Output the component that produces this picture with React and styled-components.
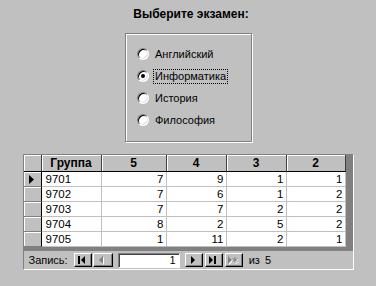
import { Fragment } from "react";
import styled, { createGlobalStyle } from "styled-components";

const GlobalStyle = createGlobalStyle`
  html, body {
    margin: 0;
    padding: 0;
    background: #c0c0c0;
  }
  body {
    font-family: "Liberation Sans", Arial, sans-serif;
    font-size: 11px;
    color: #000;
  }
`;

const Page = styled.div`
  width: 376px;
  height: 286px;
  display: flex;
  flex-direction: column;
  align-items: center;
  box-sizing: border-box;
  padding-top: 7px;
  background: #c0c0c0;
`;

const Title = styled.div`
  font-size: 12px;
  font-weight: 700;
  line-height: 14px;
  margin-left: 6px;
`;

const GroupBox = styled.div`
  box-sizing: border-box;
  width: 127px;
  height: 109px;
  margin-top: 12px;
  margin-left: 1px;
  border: 1px solid #808080;
  box-shadow: inset 1px 1px #ffffff, 1px 1px #ffffff;
  display: flex;
  flex-direction: column;
  padding: 9px 0 0 11px;
`;

const RadioRow = styled.label`
  display: flex;
  align-items: center;
  height: 22px;
  gap: 4px;
`;

const RadioCircle = styled.span`
  box-sizing: border-box;
  width: 12px;
  height: 12px;
  border-radius: 50%;
  border: 1px solid;
  border-color: #808080 #ffffff #ffffff #808080;
  background: #ffffff;
  box-shadow: inset 1px 1px #000000, inset -1px -1px #dfdfdf;
  display: flex;
  align-items: center;
  justify-content: center;

  &::after {
    content: "";
    width: 4px;
    height: 4px;
    border-radius: 50%;
    background: ${(p) => (p.$checked ? "#000" : "transparent")};
  }
`;

const RadioLabel = styled.span`
  font-size: 11px;
  line-height: 13px;
  padding: 0 1px;
  border: 1px dotted ${(p) => (p.$focused ? "#000" : "transparent")};
`;

const Frame = styled.div`
  box-sizing: border-box;
  width: 331px;
  margin-top: 12px;
  border: 1px solid;
  border-color: #808080 #ffffff #ffffff #808080;
  display: flex;
  flex-direction: column;
`;

const DataArea = styled.div`
  background: #808080;
  padding: 0 7px 4px 0;
`;

const Grid = styled.div`
  display: grid;
  grid-template-columns: 18px 60px 65px 60px 60px 59px;
  grid-auto-rows: 15px;
  grid-template-rows: 17px;
`;

const HeadCell = styled.div`
  box-sizing: border-box;
  background: #c0c0c0;
  border-right: 1px solid #404040;
  border-bottom: 1px solid #000;
  box-shadow: inset 1px 1px #ffffff;
  font-size: 12px;
  font-weight: 700;
  line-height: 16px;
  text-align: center;
`;

const Selector = styled.div`
  box-sizing: border-box;
  background: #c0c0c0;
  border-right: 1px solid #000;
  border-bottom: 1px solid #808080;
  box-shadow: inset 1px 1px #ffffff;
  display: flex;
  align-items: center;
  justify-content: center;
`;

const Cell = styled.div`
  box-sizing: border-box;
  background: #ffffff;
  border-right: 1px solid #c0c0c0;
  border-bottom: 1px solid #c0c0c0;
  font-size: 11.5px;
  line-height: 14px;
  padding: 0 2px 0 4px;
  text-align: ${(p) => (p.$num ? "right" : "left")};
`;

const NavBar = styled.div`
  height: 18px;
  display: flex;
  align-items: center;
  padding-left: 5px;
  background: #c0c0c0;
`;

const NavLabel = styled.span`
  font-size: 11px;
  margin-right: 6px;
`;

const NavButton = styled.span`
  box-sizing: border-box;
  width: ${(p) => p.$w || 18}px;
  height: 14px;
  margin-right: ${(p) => p.$mr ?? 2}px;
  background: #c0c0c0;
  border: 1px solid;
  border-color: #ffffff #000000 #000000 #ffffff;
  box-shadow: inset -1px -1px #808080;
  display: flex;
  align-items: center;
  justify-content: center;
`;

const RecordInput = styled.span`
  box-sizing: border-box;
  width: 62px;
  height: 15px;
  margin-right: 5px;
  background: #ffffff;
  border: 1px solid;
  border-color: #808080 #ffffff #ffffff #808080;
  box-shadow: inset 1px 1px #404040;
  font-size: 11px;
  line-height: 13px;
  text-align: right;
  padding-right: 3px;
`;

const NavCount = styled.span`
  font-size: 11px;
  margin-left: 6px;
  word-spacing: 2px;
`;

const rows = [
  ["9701", 7, 9, 1, 1],
  ["9702", 7, 6, 1, 2],
  ["9703", 7, 7, 2, 2],
  ["9704", 8, 2, 5, 2],
  ["9705", 1, 11, 2, 1],
];

const exams = ["Английский", "Информатика", "История", "Философия"];

function Icon({ kind, disabled }) {
  const c = disabled ? "#808080" : "#000";
  const shadow = disabled ? "#ffffff" : "none";
  const shapes = {
    first: (f) => (
      <>
        <rect x="1" y="0" width="2" height="8" fill={f} />
        <polygon points="8,0 4,4 8,8" fill={f} />
      </>
    ),
    prev: (f) => <polygon points="6,0 2,4 6,8" fill={f} />,
    next: (f) => <polygon points="3,0 7,4 3,8" fill={f} />,
    last: (f) => (
      <>
        <polygon points="1,0 5,4 1,8" fill={f} />
        <rect x="6" y="0" width="2" height="8" fill={f} />
      </>
    ),
    add: (f) => (
      <>
        <polygon points="0,0 4,4 0,8" fill={f} />
        <path d="M7 1v6M4.5 2.5l5 3M9.5 2.5l-5 3" stroke={f} strokeWidth="1" />
      </>
    ),
  };
  return (
    <svg width="11" height="9" viewBox="0 0 11 9">
      {disabled && <g transform="translate(1,1)">{shapes[kind](shadow)}</g>}
      {shapes[kind](c)}
    </svg>
  );
}

function App() {
  return (
    <>
      <GlobalStyle />
      <Page>
        <Title>Выберите экзамен:</Title>

        <GroupBox>
          {exams.map((name) => (
            <RadioRow key={name}>
              <RadioCircle $checked={name === "Информатика"} />
              <RadioLabel $focused={name === "Информатика"}>{name}</RadioLabel>
            </RadioRow>
          ))}
        </GroupBox>

        <Frame>
          <DataArea>
            <Grid>
              <HeadCell />
              <HeadCell>Группа</HeadCell>
              <HeadCell>5</HeadCell>
              <HeadCell>4</HeadCell>
              <HeadCell>3</HeadCell>
              <HeadCell>2</HeadCell>
              {rows.map((r, i) => (
                <Fragment key={r[0]}>
                  <Selector>
                    {i === 0 && (
                      <svg width="6" height="9" viewBox="0 0 6 9">
                        <polygon points="0,0 5,4.5 0,9" fill="#000" />
                      </svg>
                    )}
                  </Selector>
                  {r.map((v, j) => (
                    <Cell key={j} $num={j > 0}>
                      {v}
                    </Cell>
                  ))}
                </Fragment>
              ))}
            </Grid>
          </DataArea>

          <NavBar>
            <NavLabel>Запись:</NavLabel>
            <NavButton $mr={1}>
              <Icon kind="first" />
            </NavButton>
            <NavButton $w={20} $mr={5}>
              <Icon kind="prev" disabled />
            </NavButton>
            <RecordInput>1</RecordInput>
            <NavButton>
              <Icon kind="next" />
            </NavButton>
            <NavButton>
              <Icon kind="last" />
            </NavButton>
            <NavButton $mr={0}>
              <Icon kind="add" disabled />
            </NavButton>
            <NavCount>из 5</NavCount>
          </NavBar>
        </Frame>
      </Page>
    </>
  );
}

export default App;
